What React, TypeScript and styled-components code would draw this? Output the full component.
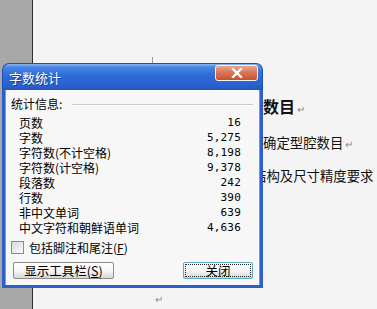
import React from "react";
import styled, { createGlobalStyle } from "styled-components";

const cjk = `"Noto Sans CJK SC", "Noto Sans", sans-serif`;

const GlobalStyle = createGlobalStyle`
  body {
    margin: 0;
    font-family: ${cjk};
  }
`;

const Screen = styled.div`
  position: relative;
  width: 377px;
  height: 309px;
  display: flex;
  overflow: hidden;
`;

const Gutter = styled.div`
  width: 32px;
  background: #a8a8a8;
  border-right: 1px solid #2f2f2f;
`;

const Page = styled.div`
  flex: 1;
  background: #f4f4f4;
  display: flex;
  flex-direction: column;
  padding-top: 57px;
`;

const CropMark = styled.div`
  width: 1px;
  height: 6px;
  margin-left: 119px;
  background: #9a9a9a;
`;

const DocLine = styled.div<{ $indent: number; $size: number; $top: number; $bold?: boolean }>`
  margin-left: ${(p) => p.$indent}px;
  margin-top: ${(p) => p.$top}px;
  font-size: ${(p) => p.$size}px;
  line-height: ${(p) => Math.round(p.$size) + 2}px;
  font-weight: ${(p) => (p.$bold ? 700 : 400)};
  color: #111;
  white-space: nowrap;
`;

const Mark = styled.span`
  color: #8a8a8a;
  font-size: 10px;
  font-weight: 400;
  margin-left: 2px;
`;

const Dialog = styled.div`
  position: absolute;
  left: 2px;
  top: 63px;
  width: 261px;
  height: 225px;
  display: flex;
  flex-direction: column;
  font-size: 12px;
  color: #000;
`;

const TitleBar = styled.div`
  height: 26px;
  border-radius: 7px 7px 0 0;
  background: linear-gradient(#8cb8f2 0%, #4a86e4 12%, #2f6ad9 45%, #2a62d0 80%, #2456bd 100%);
  border: 1px solid #1d4fb8;
  border-bottom: none;
  display: flex;
  align-items: center;
  padding: 0 4px 0 6px;
`;

const Title = styled.span`
  flex: 1;
  color: #fff;
  font-size: 13px;
  line-height: 14px;
  margin-top: 1px;
  text-shadow: 1px 1px 0 #1a3f8e;
`;

const CloseButton = styled.div`
  width: 41px;
  height: 14px;
  margin-top: -9px;
  border: 1px solid #f2f2f2;
  border-radius: 3px;
  background: linear-gradient(#eba78f 0%, #dd7a5c 40%, #c9502f 100%);
  display: flex;
  align-items: center;
  justify-content: center;
`;

const Body = styled.div`
  flex: 1;
  background: #f7f7f7;
  border: 3px solid #2c5fcb;
  border-top: none;
  box-shadow: inset 1px 0 0 #6f98e6, inset -1px 0 0 #6f98e6;
  display: flex;
  flex-direction: column;
  padding: 7px 7px 0 6px;
`;

const SectionHeader = styled.div`
  display: flex;
  align-items: center;
  line-height: 14px;
  height: 14px;
`;

const Divider = styled.div`
  flex: 1;
  height: 1px;
  margin: 1px 0 0 10px;
  background: #c9c9c9;
  border-bottom: 1px solid #fff;
`;

const Stats = styled.div`
  display: flex;
  flex-direction: column;
  margin: 4px 12px 0 8px;
`;

const StatRow = styled.div`
  display: flex;
  justify-content: space-between;
  height: 15px;
  line-height: 15px;
`;

const Value = styled.span`
  font-family: "DejaVu Sans Mono", monospace;
  font-size: 11px;
  letter-spacing: 0.2px;
`;

const CheckRow = styled.label`
  display: flex;
  align-items: center;
  margin-top: 6px;
  height: 13px;
  line-height: 13px;
`;

const Box = styled.span`
  width: 11px;
  height: 11px;
  border: 1px solid #8a8a8a;
  background: linear-gradient(135deg, #d8d8d8, #fbfbfb);
  margin-right: 5px;
`;

const Buttons = styled.div`
  display: flex;
  justify-content: space-between;
  margin: 8px 0 0 2px;
`;

const Button = styled.div<{ $width: number; $default?: boolean }>`
  width: ${(p) => p.$width}px;
  height: 17px;
  box-sizing: border-box;
  border: 1px solid ${(p) => (p.$default ? "#5aaac4" : "#8c8c8c")};
  border-radius: 2px;
  background: linear-gradient(#ffffff 0%, #f4f4f4 55%, #d6d6d6 100%);
  display: flex;
  align-items: center;
  justify-content: center;
  font-size: 12.5px;
  line-height: 13px;
  padding: 1px;
`;

const FocusRect = styled.span`
  flex: 1;
  align-self: stretch;
  border: 1px dotted #222;
  text-align: center;
  line-height: 11px;
`;

const stats: [string, string][] = [
  ["页数", "16"],
  ["字数", "5,275"],
  ["字符数(不计空格)", "8,198"],
  ["字符数(计空格)", "9,378"],
  ["段落数", "242"],
  ["行数", "390"],
  ["非中文单词", "639"],
  ["中文字符和朝鲜语单词", "4,636"],
];

export default function App() {
  return (
    <Screen>
      <GlobalStyle />
      <Gutter />
      <Page>
        <CropMark />
        <DocLine $indent={214} $size={16} $top={34} $bold>
          腔数目<Mark>↵</Mark>
        </DocLine>
        <DocLine $indent={230} $size={13.4} $top={17}>
          确定型腔数目<Mark>↵</Mark>
        </DocLine>
        <DocLine $indent={220} $size={13.4} $top={17}>
          结构及尺寸精度要求
        </DocLine>
        <DocLine $indent={120} $size={10} $top={110}>
          <Mark>↵</Mark>
        </DocLine>
      </Page>
      <Dialog>
        <TitleBar>
          <Title>字数统计</Title>
          <CloseButton>
            <svg width="14" height="10" viewBox="0 0 14 10">
              <path d="M3 1 L11 9 M11 1 L3 9" stroke="#fff" strokeWidth="2.4" strokeLinecap="square" />
            </svg>
          </CloseButton>
        </TitleBar>
        <Body>
          <SectionHeader>
            统计信息:
            <Divider />
          </SectionHeader>
          <Stats>
            {stats.map(([label, value]) => (
              <StatRow key={label}>
                <span>{label}</span>
                <Value>{value}</Value>
              </StatRow>
            ))}
          </Stats>
          <CheckRow>
            <Box />
            包括脚注和尾注(<u>F</u>)
          </CheckRow>
          <Buttons>
            <Button $width={101}>
              显示工具栏(<u>S</u>)
            </Button>
            <Button $width={70} $default>
              <FocusRect>关闭</FocusRect>
            </Button>
          </Buttons>
        </Body>
      </Dialog>
    </Screen>
  );
}
